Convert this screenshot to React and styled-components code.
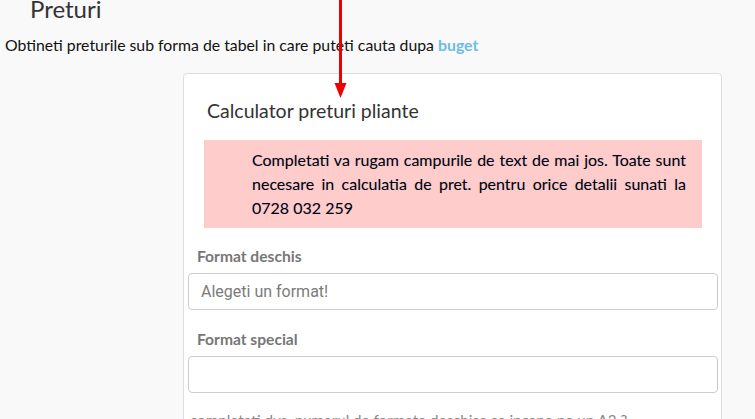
import React from "react";
import styled, { createGlobalStyle } from "styled-components";

const Global = createGlobalStyle`
  html, body { margin: 0; padding: 0; background: #f9f9f9; }
  body { font-family: Lato, "Open Sans", sans-serif; color: #333; overflow: hidden; }
  * { box-sizing: border-box; }
`;

const Page = styled.div`
  position: relative;
  width: 755px;
  height: 419px;
  overflow: hidden;
`;

const Heading = styled.h2`
  margin: -4px 0 0 30px;
  font-size: 24px;
  line-height: 26px;
  font-weight: 400;
  color: #333;
`;

const Intro = styled.p`
  margin: 12px 0 0 5px;
  font-size: 15.8px;
  line-height: 22px;
  color: #111;
`;

const Highlight = styled.a`
  color: #6bbde6;
  font-weight: 700;
  text-decoration: none;
`;

const Card = styled.section`
  margin: 17px 0 0 183px;
  width: 539px;
  background: #fff;
  border: 1px solid #dddddd;
  border-radius: 4px;
  padding: 0 4px 0 4px;
`;

const CardTitle = styled.h3`
  margin: 0;
  padding: 25px 0 0 19px;
  font-size: 19.5px;
  line-height: 24px;
  font-weight: 400;
  color: #333;
`;

const Alert = styled.div`
  margin: 17px 15px 0 16px;
  background: #ffcccc;
  padding: 8px 16px 8px 48px;
  font-size: 16px;
  line-height: 24px;
  color: #000;
  text-align: justify;
  text-shadow: 0 0 1px rgba(90, 140, 255, 0.35);
`;

const Group = styled.div`
  margin-top: ${(p) => p.$top}px;
  display: flex;
  flex-direction: column;
`;

const Label = styled.label`
  padding-left: 9px;
  font-size: 15.6px;
  line-height: 20px;
  font-weight: 700;
  color: #777;
  margin-bottom: 7px;
`;

const Input = styled.input`
  width: 530px;
  height: ${(p) => p.$h}px;
  border: 1px solid #cccccc;
  border-radius: 4px;
  padding: 0 12px;
  font-family: Roboto, "Liberation Sans", Arial, sans-serif;
  font-size: 16px;
  color: #555;
  background: #fff;
  outline: none;
  &::placeholder { color: #7b7b7b; }
`;

const Hint = styled.p`
  margin: 17px 0 0 2px;
  font-size: 15.2px;
  line-height: 20px;
  color: #888;
  white-space: nowrap;
`;

const Arrow = styled.svg`
  position: absolute;
  left: 334px;
  top: 0;
`;

export default function App() {
  return (
    <Page>
      <Global />
      <Heading>Preturi</Heading>
      <Intro>
        Obtineti preturile sub forma de tabel in care puteti cauta dupa{" "}
        <Highlight href="#">buget</Highlight>
      </Intro>
      <Card>
        <CardTitle>Calculator preturi pliante</CardTitle>
        <Alert>
          Completati va rugam campurile de text de mai jos. Toate sunt necesare
          in calculatia de pret. pentru orice detalii sunati la 0728 032 259
        </Alert>
        <Group $top={18}>
          <Label>Format deschis</Label>
          <Input $h={37} placeholder="Alegeti un format!" />
        </Group>
        <Group $top={19}>
          <Label>Format special</Label>
          <Input $h={37} />
        </Group>
        <Hint>completati dvs. numarul de formate deschise se incape pe un A3 ?</Hint>
      </Card>
      <Arrow width="13" height="99" viewBox="0 0 13 99">
        <line x1="6.5" y1="0" x2="6.5" y2="86" stroke="#ee0000" strokeWidth="3" />
        <polygon points="0.5,83 12.5,83 6.5,98" fill="#ee0000" />
      </Arrow>
    </Page>
  );
}
